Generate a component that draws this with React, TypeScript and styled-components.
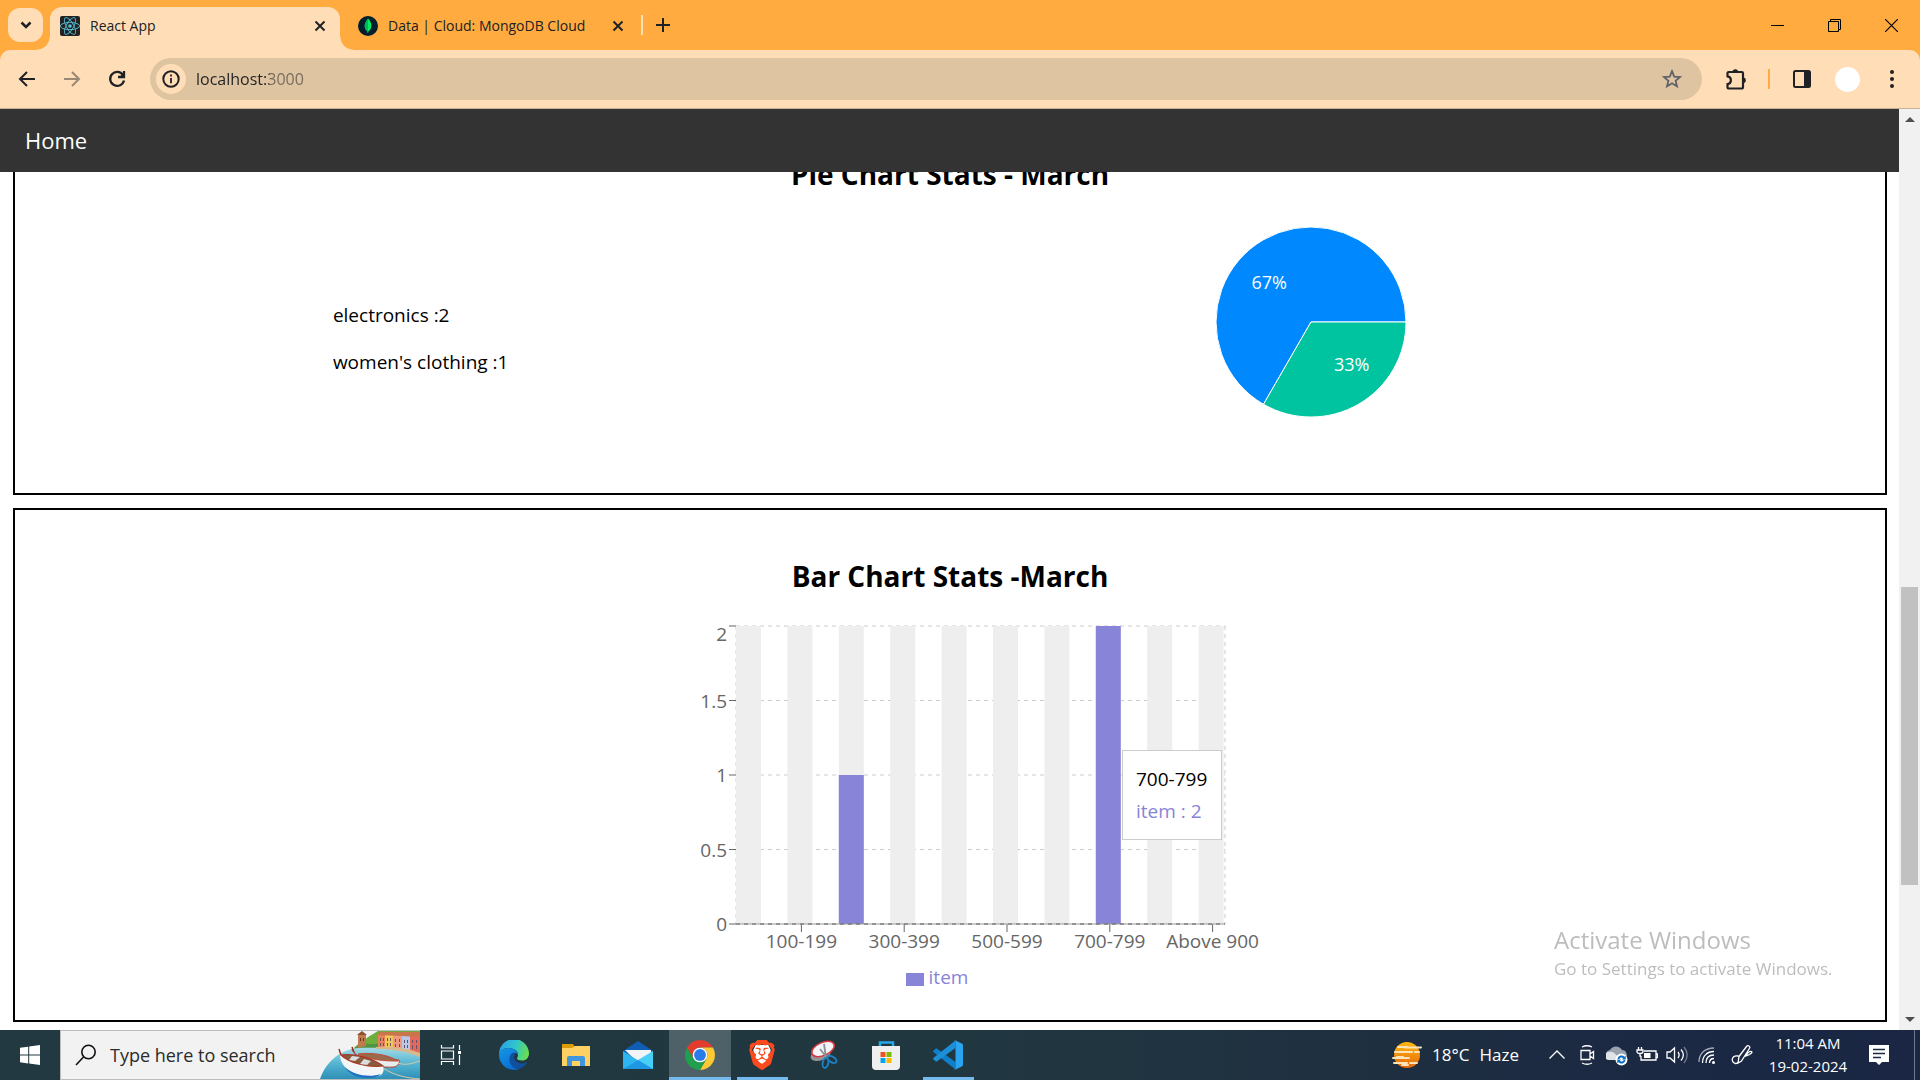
import React from "react";
import styled, { createGlobalStyle, css } from "styled-components";
import { FaReact } from "react-icons/fa";
import { SiBrave } from "react-icons/si";

const uiFont = `"Open Sans", "Noto Sans", "Liberation Sans", sans-serif`;

const GlobalStyle = createGlobalStyle`
  *, *::before, *::after { box-sizing: border-box; }
  html, body { margin: 0; padding: 0; }
  body { font-family: ${uiFont}; background: #fff; overflow: hidden; }
  button, input { font-family: inherit; }
  button { border: 0; padding: 0; background: none; color: inherit; cursor: pointer; }
  svg { display: block; flex: none; }
`;

const Screen = styled.div`
  display: flex;
  flex-direction: column;
  height: 100vh;
`;

/* ---------- browser chrome ---------- */

const TabStrip = styled.header`
  display: flex;
  align-items: center;
  flex: none;
  height: 50px;
  padding-left: 8px;
  background: #ffab40;
  color: #202124;
`;

const TabSearch = styled.button`
  display: grid;
  place-items: center;
  width: 35px;
  height: 34px;
  margin-right: 7px;
  border-radius: 12px;
  background: #ffdeb7;
`;

const Tab = styled.div<{ $active?: boolean }>`
  display: flex;
  align-items: center;
  align-self: flex-end;
  position: relative;
  height: 43px;
  padding: 0 10px 6px;
  font-size: 14px;
  line-height: 20px;
  ${(p) =>
    p.$active
      ? css`
          width: 290px;
          margin-right: 8px;
          background: #ffdeb7;
          border-radius: 12px 12px 0 0;
          &::before,
          &::after {
            content: "";
            position: absolute;
            bottom: 0;
            width: 13px;
            height: 13px;
          }
          &::before {
            right: 100%;
            background: radial-gradient(circle at 0 0, transparent 12px, #ffdeb7 13px);
          }
          &::after {
            left: 100%;
            background: radial-gradient(circle at 100% 0, transparent 12px, #ffdeb7 13px);
          }
        `
      : css`
          width: 290px;
          margin-right: 3px;
        `}
`;

const TabTitle = styled.span`
  flex: 1;
  margin-left: 10px;
  white-space: nowrap;
`;

const IconButton = styled.button<{ $w?: number }>`
  display: grid;
  place-items: center;
  flex: none;
  width: ${(p) => p.$w ?? 20}px;
  height: ${(p) => (p.$w && p.$w > 40 ? 50 : 30)}px;
`;

const StripDivider = styled.span`
  width: 2px;
  height: 20px;
  margin-right: 8px;
  background: #ffdeb7;
`;

const WindowButtons = styled.div`
  display: flex;
  align-self: stretch;
  margin-left: auto;
  color: #000;
`;

const ToolbarBack = styled.div`
  flex: none;
  background: #ffab40;
`;

const Toolbar = styled.div`
  display: flex;
  align-items: center;
  height: 59px;
  padding: 0 8px 0 7px;
  border-bottom: 1px solid #c9b193;
  border-radius: 10px 10px 0 0;
  background: #ffdeb7;
  color: #202124;
`;

const ToolGroup = styled.div`
  display: flex;
  align-items: center;
  gap: 5px;
`;

const Omnibox = styled.label`
  display: flex;
  align-items: center;
  flex: 1;
  height: 42px;
  margin: 0 14px 0 13px;
  padding: 0 15px 0 6px;
  border-radius: 21px;
  background: #dfc4a1;
`;

const InfoDot = styled.span`
  display: grid;
  place-items: center;
  width: 30px;
  height: 30px;
  margin-right: 10px;
  border-radius: 50%;
  background: #ffdeb7;
`;

const AddressInput = styled.input`
  flex: 1;
  min-width: 0;
  height: 30px;
  padding: 0;
  border: 0;
  outline: 0;
  font-size: 16px;
  line-height: 30px;
  color: #202124;
  background: linear-gradient(90deg, #202124 74px, #75695a 74px);
  -webkit-background-clip: text;
  background-clip: text;
  -webkit-text-fill-color: transparent;
`;

const ToolDivider = styled.span`
  width: 2px;
  height: 20px;
  margin: 0 12px;
  background: #ffab40;
`;

const Avatar = styled.span`
  width: 25px;
  height: 25px;
  border-radius: 50%;
  background: #fff;
`;

/* ---------- page ---------- */

const Viewport = styled.div`
  display: flex;
  flex: 1;
  min-height: 0;
`;

const Page = styled.div`
  display: flex;
  flex-direction: column;
  flex: 1;
  min-width: 0;
  overflow: hidden;
  background: #fff;
  color: #000;
`;

const Nav = styled.nav`
  position: relative;
  z-index: 2;
  display: flex;
  align-items: center;
  flex: none;
  height: 63px;
  padding: 0 25px 2px;
  background: #333;
`;

const NavLink = styled.a`
  color: #fff;
  font-size: 22px;
  line-height: 30px;
  text-decoration: none;
`;

/* Scrolled so that the first card's top edge sits under the nav bar. */
const Content = styled.main`
  display: flex;
  flex-direction: column;
  gap: 13px;
  margin-top: -66px;
  padding: 0 12px 0 13px;
`;

const Card = styled.section<{ $bottom: number }>`
  flex: none;
  padding: 46px 0 ${(p) => p.$bottom}px;
  border: 2px solid #000;
`;

const CardTitle = styled.h2`
  margin: 0 0 3px;
  font-size: 28px;
  line-height: 40px;
  font-weight: 700;
  text-align: center;
`;

const PieRow = styled.div`
  display: grid;
  grid-template-columns: 1fr 1fr;
`;

const CategoryList = styled.div`
  display: flex;
  flex-direction: column;
  gap: 20px;
  padding: 105px 0 0 34%;
  font-size: 19px;
  line-height: 27px;
`;

const CategoryLine = styled.p`
  margin: 0;
`;

const PieCell = styled.div`
  display: flex;
  justify-content: center;
  padding-right: 214px;
`;

const BarChart = styled.div`
  position: relative;
  width: 624px;
  margin: 0 auto;
  svg {
    overflow: visible;
  }
`;

const Legend = styled.div`
  display: flex;
  align-items: center;
  justify-content: center;
  gap: 5px;
  padding-right: 26px;
  color: #8884d8;
  font-size: 19px;
  line-height: 27px;
`;

const Swatch = styled.span`
  width: 18px;
  height: 13px;
  margin-top: 3px;
  background: #8884d8;
`;

const Tooltip = styled.div`
  position: absolute;
  left: 484px;
  top: 151px;
  width: 100px;
  padding: 12px 13px;
  border: 1px solid #ccc;
  background: #fff;
  font-size: 19px;
  line-height: 32px;
  white-space: nowrap;
`;

const TooltipLine = styled.p<{ $color?: string }>`
  margin: 0;
  color: ${(p) => p.$color ?? "#000"};
`;

const ScrollTrack = styled.div`
  display: flex;
  flex-direction: column;
  align-items: center;
  flex: none;
  width: 21px;
  background: #f1f1f1;
`;

const ScrollArrow = styled.button`
  display: grid;
  place-items: center;
  width: 21px;
  height: 21px;
`;

const ScrollLane = styled.div`
  display: grid;
  grid-template-rows: 457fr 298fr 124fr;
  flex: 1;
  width: 17px;
`;

const ScrollThumb = styled.div`
  grid-row: 2;
  background: #c1c1c1;
`;

const Watermark = styled.div`
  position: fixed;
  right: 80px;
  bottom: 98px;
  z-index: 5;
  width: 286px;
  color: #bdbdbd;
  font-size: 17px;
  line-height: 26px;
  white-space: nowrap;
  pointer-events: none;
`;

const WatermarkTitle = styled.div`
  font-size: 24px;
  line-height: 32px;
`;

/* ---------- taskbar ---------- */

const Taskbar = styled.footer`
  display: flex;
  flex: none;
  height: 50px;
  background: linear-gradient(90deg, #223941, #213740 50%, #1f3040 70%, #1b2943 85%, #1a2643);
  color: #fff;
`;

const TaskButton = styled.button<{ $state?: "open" | "active"; $w?: number }>`
  display: grid;
  place-items: center;
  position: relative;
  width: ${(p) => p.$w ?? 62}px;
  height: 50px;
  ${(p) =>
    p.$state &&
    css`
      background: ${p.$state === "active" ? "#4f6168" : "none"};
      &::after {
        content: "";
        position: absolute;
        bottom: 0;
        left: ${p.$state === "active" ? 0 : 6}px;
        right: ${p.$state === "active" ? 0 : 5}px;
        height: 3px;
        background: #76b9ed;
      }
    `}
`;

const SearchBox = styled.label`
  display: flex;
  align-items: center;
  width: 360px;
  padding-left: 14px;
  border: 1px solid #bcbcbc;
  border-right: 0;
  background: #f2f2f2;
  color: #1c1c1c;
`;

const SearchInput = styled.input`
  flex: 1;
  min-width: 0;
  margin-left: 13px;
  padding: 0;
  border: 0;
  outline: 0;
  background: none;
  font-size: 18px;
  line-height: 26px;
  &::placeholder {
    color: #2b2b2b;
    opacity: 1;
  }
`;

const Weather = styled.button`
  display: flex;
  align-items: center;
  gap: 10px;
  margin-left: auto;
  padding-right: 23px;
  font-size: 17px;
  line-height: 24px;
`;

const Clock = styled.button`
  width: 92px;
  font-size: 15px;
  line-height: 23px;
  text-align: center;
`;

const ShowDesktop = styled.button`
  width: 6px;
  margin-left: 10px;
  border-left: 1px solid #6d7788;
`;

/* ---------- icons ---------- */

const Cross = () => (
  <svg width="12" height="12" viewBox="0 0 12 12" stroke="currentColor" strokeWidth="2">
    <path d="M1.5 1.5l9 9M10.5 1.5l-9 9" />
  </svg>
);

const MongoIcon = () => (
  <svg width="20" height="20" viewBox="0 0 20 20">
    <circle cx="10" cy="10" r="10" fill="#001e2b" />
    <path d="M10 2.5C12.5 5 13.4 7.300 13.400 9.700c0 2.600-1.500 4.500-3.100 5.800l-.2 1.800h-.3l-.2-1.800C8 14.200 6.700 12.300 6.700 9.700 6.700 7.200 8.300 5 10 2.500z" fill="#00ed64" />
    <path d="M10 3v14.300h-.2l-.2-1.800C8 14.200 6.700 12.300 6.700 9.700 6.700 7.200 8.300 5 10 3z" fill="#00b755" />
  </svg>
);

const BackArrow = ({ flip }: { flip?: boolean }) => (
  <svg width="18" height="18" viewBox="0 0 18 18" fill="none" stroke="currentColor" strokeWidth="2" opacity={flip ? 0.45 : 1} transform={flip ? "scale(-1 1)" : undefined}>
    <path d="M17 9H3M9 2L2 9l7 7" />
  </svg>
);

const Reload = () => (
  <svg width="18" height="18" viewBox="0 0 18 18" fill="none" stroke="currentColor" strokeWidth="2.300">
    <path d="M15 5A7 7 0 1 0 16 10.500" />
    <path d="M16 1v6h-6" />
    <path d="M15.800 2.500v4.300h-4z" fill="currentColor" stroke="none" />
  </svg>
);

const Info = () => (
  <svg width="18" height="18" viewBox="0 0 18 18" fill="none" stroke="currentColor">
    <circle cx="9" cy="9" r="7.700" strokeWidth="2" />
    <path d="M9 8v5.200M9 4.600v2" strokeWidth="1.800" />
  </svg>
);

const Star = () => (
  <svg width="20" height="20" viewBox="0 0 20 20" fill="none" stroke="#5f6368" strokeWidth="1.800">
    <path d="M10 2.200l2.200 5.400 5.800.4-4.400 3.800 1.400 5.600-5-3.100-5 3.100 1.400-5.600L2 8l5.800-.4z" />
  </svg>
);

const Puzzle = () => (
  <svg width="22" height="22" viewBox="0 0 22 22" fill="none" stroke="currentColor" strokeWidth="2.200">
    <path d="M2.500 8.300V5.200a1.200 1.200 0 0 1 1.200-1.200h13.100A1.200 1.200 0 0 1 18 5.200v14.100a1.200 1.200 0 0 1-1.200 1.200H3.700a1.200 1.200 0 0 1-1.200-1.200v-3.200c4.500-.6 4.500-7.200 0-7.800z" />
    <path d="M7.500 4a2.800 2.800 0 0 1 5.600 0zM18 9.500a2.800 2.800 0 0 1 0 5.600z" fill="currentColor" stroke="none" />
  </svg>
);

const SidePanel = () => (
  <svg width="18" height="18" viewBox="0 0 18 18">
    <rect x="1" y="1" width="16" height="16" rx="1.500" fill="none" stroke="currentColor" strokeWidth="2" />
    <path d="M11 1h6v16h-6z" fill="currentColor" />
  </svg>
);

const Dots = () => (
  <svg width="4" height="18" viewBox="0 0 4 18" fill="currentColor">
    <circle cx="2" cy="2" r="2" />
    <circle cx="2" cy="9" r="2" />
    <circle cx="2" cy="16" r="2" />
  </svg>
);

const SearchArt = () => (
  <svg width="100" height="48" viewBox="0 0 100 48">
    <defs>
      <linearGradient id="sea" x1="0" y1="0" x2="0" y2="1">
        <stop offset="0" stopColor="#a5dbe6" />
        <stop offset=".5" stopColor="#55b5d2" />
        <stop offset="1" stopColor="#2e8fb8" />
      </linearGradient>
    </defs>
    <path d="M34 17C40 10 52 4 58 0h42v22L62 20z" fill="#6fae3e" />
    <path d="M34 18c4-5 10-6 15-5s12-3 20 4l-10 5z" fill="#4f9440" />
    <path d="M38 3l4-2 4 3v11l-8 2z" fill="#c07a4e" />
    <path d="M37 4l5-4 5 4z" fill="#8f4f35" />
    <path d="M40 7h1v3h-1zM43 7h1v3h-1z" fill="#633" />
    <path d="M58 4h7v13h-7z" fill="#e98256" />
    <path d="M65 3h8v14h-8z" fill="#f3c757" />
    <path d="M73 4h9v14h-9z" fill="#ef9a80" />
    <path d="M82 5h8v14h-8z" fill="#b9c7e8" />
    <path d="M90 4h10v17H90z" fill="#e4695b" />
    <path d="M57 4l3-3h40v5l-18-1z" fill="#c9764a" />
    <g fill="#65536b">
      <path d="M60 7h1v3h-1zM63 7h1v3h-1zM67 7h1v3h-1zM70 7h1v3h-1zM75 8h1v3h-1zM79 8h1v3h-1zM84 9h1v3h-1zM87 9h1v3h-1zM92 9h1v3h-1zM96 9h1v3h-1z" />
      <path d="M60 12h1v3h-1zM63 12h1v3h-1zM67 12h1v3h-1zM70 12h1v3h-1zM75 13h1v3h-1zM79 13h1v3h-1zM84 14h1v3h-1zM87 14h1v3h-1zM92 14h1v4h-1zM96 14h1v4h-1z" />
    </g>
    <path d="M0 48C5 33 18 19 38 17c20-1 40 0 62 7v24z" fill="url(#sea)" />
    <path d="M56 16c16-1 30 1 44 6v4c-14-6-28-8-44-8z" fill="#d9b88b" />
    <path d="M32 18c2 6 6 7 11 8l36 3c1 3-1 6-5 7-12 1-27-2-36-9z" fill="#e9ecef" stroke="#b43c2c" strokeWidth="1" />
    <path d="M38 23c12 6 26 7 40 7-9-6-26-9-40-7z" fill="#9a6a4a" stroke="#c24a36" />
    <path d="M20 22c-1 10 8 20 20 23 10 2 20 1 22-2 2-3 2-5 1-8-18-1-34-5-43-13z" fill="#f4f5f6" />
    <path d="M25 36c8 8 24 11 36 7-4 4-12 5-22 3-7-2-12-6-14-10z" fill="#1f6fc4" />
    <path d="M21 24c12-2 32 3 42 11-14 2-34-3-42-11z" fill="#8b5a3c" stroke="#a93425" strokeWidth="1.200" />
    <path d="M32 25l-3 4 6 1 5-4zM44 28l-4 5 7 1 4-4z" fill="#d9dde0" />
    <path d="M19 18l2 6M32 16l2 5" stroke="#8f3427" strokeWidth="1.500" />
    <path d="M63 37c12 8 25 10 37 11M78 32c8 3 15 0 22-2" stroke="#d9c9a0" fill="none" />
  </svg>
);

const EdgeIcon = () => (
  <svg width="30" height="30" viewBox="0 0 30 30">
    <defs>
      <linearGradient id="edgeTop" x1="0" y1=".4" x2="1" y2=".6">
        <stop offset="0" stopColor="#2a9fe6" />
        <stop offset=".5" stopColor="#2fc5cf" />
        <stop offset="1" stopColor="#6be04a" />
      </linearGradient>
      <linearGradient id="edgeSide" x1="0" y1="0" x2=".5" y2="1">
        <stop offset="0" stopColor="#1597e8" />
        <stop offset="1" stopColor="#0a6fd0" />
      </linearGradient>
    </defs>
    <path d="M0 15A15 15 0 0 1 30 13c0 5-3 7.500-7 7.500-3 0-5-.8-5-2 0-1 1-1.500 1-3.500C19 10 14 8 9.500 8 4 8 .6 11 0 15z" fill="url(#edgeTop)" />
    <path d="M0 15c.6-4 4-7 9.500-7 5 0 9.500 3 9.500 6.500-2-2-4-2.500-6-1-3 2.500-2 10 5 12.500l2 3A15 15 0 0 1 0 15z" fill="url(#edgeSide)" />
    <path d="M13 13.500c-5 4-3 13 5 15.700 4-.7 8-3 10-6.200.4-.6 0-.9-.6-.6-4 2-9 1-11.400-2.400-1.500-2.200-1-4.500.5-6.300-1.200-.8-2.500-.8-3.500-.2z" fill="#114f9f" />
  </svg>
);

const FolderIcon = () => (
  <svg width="30" height="30" viewBox="0 0 30 30">
    <path d="M1 4h11l2 3v4H1z" fill="#dc9a06" />
    <path d="M1 8h10l3-2h15v20H1z" fill="#ffd062" />
    <path d="M6 26v-8a2 2 0 0 1 2-2h14a2 2 0 0 1 2 2v8h-5v-5h-8v5z" fill="#3f96dc" />
  </svg>
);

const MailIcon = () => (
  <svg width="30" height="30" viewBox="0 0 30 30">
    <path d="M0 11L15 1l15 10v4H0z" fill="#0f5eb4" />
    <path d="M2 10h26v7l-13 6z" fill="#f1f3f6" />
    <path d="M0 11l16 10L0 29z" fill="#2eb4ee" />
    <path d="M30 11L0 29h30z" fill="#48cff8" />
    <path d="M0 29h30L15 20z" fill="#1e98e2" />
  </svg>
);

const ChromeIcon = () => (
  <svg width="30" height="30" viewBox="0 0 48 48">
    <circle cx="24" cy="24" r="12" fill="#fff" />
    <path d="M24 12h20.780a24 24 0 0 0-41.560 0L13.610 30A12 12 0 0 1 24 12z" fill="#e33b2e" />
    <path d="M34.390 30L24 48A24 24 0 0 0 44.780 12H24a12 12 0 0 1 10.390 18z" fill="#fcc934" />
    <path d="M13.610 30L3.220 12A24 24 0 0 0 24 48l10.390-18a12 12 0 0 1-20.780 0z" fill="#1fa04c" />
    <circle cx="24" cy="24" r="9.500" fill="#2a7bea" />
  </svg>
);

const BraveIcon = () => (
  <svg width="30" height="30" viewBox="0 0 24 24">
    <path d="M7 4h10l2 4-2 8-5 4-5-4-2-8z" fill="#fff" />
    <SiBrave size={24} color="#fb4a1e" />
  </svg>
);

const SnipIcon = () => (
  <svg width="30" height="30" viewBox="0 0 30 30" fill="none">
    <ellipse cx="12" cy="14" rx="11" ry="6" transform="rotate(-24 12 14)" fill="#90969a" />
    <ellipse cx="14" cy="9" rx="12" ry="6.500" transform="rotate(-24 14 9)" fill="#f4f5f6" stroke="#d9363b" strokeWidth="1.500" />
    <path d="M11 9l7 9M15 4l2 14" stroke="#8b9196" strokeWidth="1.800" />
    <ellipse cx="16.500" cy="23" rx="2.800" ry="5" transform="rotate(12 16.500 23)" stroke="#1d7fc0" strokeWidth="2" />
    <ellipse cx="23" cy="19.500" rx="2.800" ry="5" transform="rotate(-60 23 19.500)" stroke="#1d7fc0" strokeWidth="2" />
  </svg>
);

const StoreIcon = () => (
  <svg width="30" height="30" viewBox="0 0 30 30">
    <path d="M9 8V2.500h13V8" fill="none" stroke="#24a8e8" strokeWidth="2.500" />
    <path d="M1 6h28v20a4 4 0 0 1-4 4H5a4 4 0 0 1-4-4z" fill="#efefef" />
    <path d="M9.500 12h5v5h-5z" fill="#f25022" />
    <path d="M15.500 12h5v5h-5z" fill="#7fba00" />
    <path d="M9.500 18h5v5h-5z" fill="#00a4ef" />
    <path d="M15.500 18h5v5h-5z" fill="#ffb900" />
  </svg>
);

const CodeIcon = () => (
  <svg width="30" height="30" viewBox="0 0 30 30">
    <path d="M.6 10.500l2-1.800c.4-.4 1-.4 1.500 0L22.500 22v7.500L.6 12.300c-.6-.5-.6-1.200 0-1.800z" fill="#0f7fc9" />
    <path d="M.6 19.500l2 1.800c.4.4 1 .4 1.500 0L22.500 8V.5L.6 17.700c-.6.500-.6 1.200 0 1.800z" fill="#1b8fd8" />
    <path d="M22.500.4l6.300 3c.7.300 1.200 1 1.200 1.800v19.600c0 .8-.5 1.500-1.200 1.800l-6.300 3c-.7.300-1.500.2-2-.4 1 .8 2 .3 2-1V1.800c0-1.300-1-1.800-2-1 .5-.6 1.300-.7 2-.4z" fill="#2ba4f0" />
  </svg>
);

const HazeIcon = () => (
  <svg width="30" height="28" viewBox="0 0 30 28">
    <defs>
      <linearGradient id="sun" x1="0" y1="0" x2="0" y2="1">
        <stop offset="0" stopColor="#fcb90e" />
        <stop offset="1" stopColor="#e8650c" />
      </linearGradient>
    </defs>
    <circle cx="15" cy="14" r="13" fill="url(#sun)" />
    <g stroke="#fbe3ba" strokeWidth="2" strokeLinecap="round">
      <path d="M6 6h9M13 6.500h16M3 11h17M23 11h4M1 17h16M5 16h6M2 22h13M18 22h7M10 24h6" />
    </g>
  </svg>
);

const TrayIcon = ({ name }: { name: string }) => (
  <svg width="22" height="22" viewBox="0 0 22 22" fill="none" stroke="#fff" strokeWidth="1.300">
    {name === "More" && <path d="M3.500 14.500L11 7l7.500 7.500" />}
    {name === "Camera" && <path d="M6 3c3-1.500 7-1.500 10 0M6 19c3 1.500 7 1.500 10 0M5 6.500h9v9H5zM14 10l3.500-2.500v7L14 12" />}
    {name === "Cloud" && (
      <g stroke="none">
        <path d="M5 14a4 4 0 0 1-1-8 7 7 0 0 1 12 0 4.500 4.500 0 0 1 3 8z" fill="#9aa2ae" />
        <path d="M3 16a4 4 0 0 1 0-8c3-1 6 1 7 3l5 5z" fill="#dfe3e8" />
        <circle cx="15.500" cy="15.500" r="6" fill="#fff" />
        <path d="M11.500 15a4 4 0 0 1 7-2.200l1.200-1v3.700H16l1.200-1.200a2.500 2.500 0 0 0-4 .7zM19.500 16a4 4 0 0 1-7 2.200l-1.200 1v-3.700H15l-1.200 1.200a2.500 2.500 0 0 0 4-.7z" fill="#0a6cc4" />
      </g>
    )}
    {name === "Battery" && (
      <g>
        <path d="M8 7h12v9H5v-4M20.500 10h1v3.500h-1M2.500 3v3M5.500 3v3M1 6h6v1.500c0 1.500-1 2-3 2s-3-.5-3-2zM4 9.500V12h1" />
        <path d="M8 9h6.500v5H8z" fill="#fff" stroke="none" />
      </g>
    )}
    {name === "Volume" && (
      <g>
        <path d="M1 8h3l4.500-4v14L4 14H1z" />
        <path d="M12 8c1.500 2 1.500 4 0 6M15 5.500c3 3.500 3 7.500 0 11" />
        <path d="M18 3c4 5 4 11 0 16" opacity=".4" />
      </g>
    )}
    {name === "Network" && (
      <g>
        <path d="M3 18C3 9.500 9 4 18 4" opacity=".6" />
        <path d="M6.500 19C6.500 12 11 7.500 18 7.500M10 19c0-5 3-8 8-8M13.500 19c0-3 1.500-4.500 4.500-4.500" />
        <circle cx="17.500" cy="18.500" r="1.500" fill="#fff" stroke="none" />
      </g>
    )}
    {name === "Pen" && (
      <path d="M8 12.500l7.500-10c1.500-1.800 4-.3 3 1.800L10.500 17l-3.500 2zM8 12.500L7 19M7.500 12C3 11 .5 14 1.500 17c1 3 5 3.500 6 .5M14.500 12c2-3 4.500-5 6-4.500s-1 3.500-6 4.500z" />
    )}
  </svg>
);

const taskIcons: { label: string; icon: React.ReactNode; state?: "open" | "active" }[] = [
  { label: "Microsoft Edge", icon: <EdgeIcon /> },
  { label: "File Explorer", icon: <FolderIcon /> },
  { label: "Mail", icon: <MailIcon /> },
  { label: "Google Chrome", icon: <ChromeIcon />, state: "active" },
  { label: "Brave", icon: <BraveIcon />, state: "open" },
  { label: "Snipping Tool", icon: <SnipIcon /> },
  { label: "Microsoft Store", icon: <StoreIcon /> },
  { label: "Visual Studio Code", icon: <CodeIcon />, state: "open" },
];

/* ---------- charts ---------- */

const Pie = () => (
  <svg width="250" height="250" viewBox="0 0 250 250" stroke="#fff" fontSize="18" fontFamily={uiFont} role="img" aria-label="Share of items by category">
    <path d="M125 125H220A95 95 0 1 0 77.500 207.270z" fill="#0088fe" />
    <path d="M125 125H220A95 95 0 0 1 77.500 207.270z" fill="#00c49f" />
    <g fill="#fff" stroke="none">
      <text x="101" y="92" textAnchor="end">67%</text>
      <text x="148" y="174">33%</text>
    </g>
  </svg>
);

const bins = [
  { label: "0-99", items: 0 },
  { label: "100-199", items: 0 },
  { label: "200-299", items: 1 },
  { label: "300-399", items: 0 },
  { label: "400-499", items: 0 },
  { label: "500-599", items: 0 },
  { label: "600-699", items: 0 },
  { label: "700-799", items: 2 },
  { label: "800-899", items: 0 },
  { label: "Above 900", items: 0 },
];

const plot = { left: 98, right: 587, top: 27, bottom: 325, step: 51.4, bar: 25 };

const Bars = () => {
  const valueY = (v: number) => plot.bottom - ((plot.bottom - plot.top) * v) / 2;
  return (
    <svg width="624" height="365" viewBox="0 0 624 365" fontSize="19" fontFamily={uiFont} role="img" aria-label="Items by price range">
      <g stroke="#ccc" strokeDasharray="4 4" fill="none">
        {[0, 0.5, 1, 1.5, 2].map((v) => (
          <path key={v} d={`M${plot.left} ${valueY(v)}H${plot.right}`} />
        ))}
        <path d={`M${plot.left} ${plot.top}V${plot.bottom}M${plot.right} ${plot.top}V${plot.bottom}`} />
      </g>
      {bins.map((b, i) => {
        const x = plot.left + plot.step * i;
        return (
          <g key={b.label}>
            <rect x={x} y={plot.top} width={plot.bar} height={plot.bottom - plot.top} fill="#eee" />
            <rect x={x} y={valueY(b.items)} width={plot.bar} height={plot.bottom - valueY(b.items)} fill="#8884d8" />
            {i % 2 === 1 && (
              <>
                <path d={`M${x + 14} ${plot.bottom}v8`} stroke="#666" />
                <text x={x + 14} y={349} fill="#666" textAnchor="middle">{b.label}</text>
              </>
            )}
          </g>
        );
      })}
      <path d={`M${plot.left} ${plot.bottom}H${plot.right}`} stroke="#999" />
      <path d={`M${plot.left} ${plot.bottom}H${plot.right}`} stroke="#666" strokeDasharray="4 4" />
      {[0, 0.5, 1, 1.5, 2].map((v) => (
        <g key={v}>
          <path d={`M${plot.left - 7} ${valueY(v)}h7`} stroke="#666" />
          <text x={plot.left - 9} y={valueY(v) + (v === 2 ? 15 : 7)} fill="#666" textAnchor="end">{v}</text>
        </g>
      ))}
    </svg>
  );
};

export default function App() {
  return (
    <Screen>
      <GlobalStyle />
      <TabStrip>
        <TabSearch aria-label="Search tabs">
          <svg width="12" height="8" viewBox="0 0 12 8" fill="none" stroke="currentColor" strokeWidth="2.500">
            <path d="M1.500 1.500L6 6l4.500-4.500" />
          </svg>
        </TabSearch>
        <Tab $active>
          <svg width="20" height="20" viewBox="0 0 20 20">
            <rect width="20" height="20" rx="2" fill="#222" />
            <FaReact size={20} color="#53bcd6" />
          </svg>
          <TabTitle>React App</TabTitle>
          <IconButton aria-label="Close React App"><Cross /></IconButton>
        </Tab>
        <Tab>
          <MongoIcon />
          <TabTitle>Data | Cloud: MongoDB Cloud</TabTitle>
          <IconButton aria-label="Close MongoDB Cloud"><Cross /></IconButton>
        </Tab>
        <StripDivider />
        <IconButton $w={24} aria-label="New tab">
          <svg width="14" height="14" viewBox="0 0 14 14" stroke="currentColor" strokeWidth="2">
            <path d="M7 0v14M0 7h14" />
          </svg>
        </IconButton>
        <WindowButtons>
          <IconButton $w={57} aria-label="Minimize">
            <svg width="13" height="13" viewBox="0 0 13 13"><path d="M0 6h13v1H0z" /></svg>
          </IconButton>
          <IconButton $w={57} aria-label="Restore">
            <svg width="13" height="13" viewBox="0 0 13 13" fill="none" stroke="currentColor">
              <path d="M.5 2.500h10v10H.5zM2.500 2.500v-2h10v10h-2" />
            </svg>
          </IconButton>
          <IconButton $w={57} aria-label="Close window">
            <svg width="13" height="13" viewBox="0 0 13 13" stroke="currentColor" strokeWidth="1.200">
              <path d="M0 0l13 13M13 0L0 13" />
            </svg>
          </IconButton>
        </WindowButtons>
      </TabStrip>
      <ToolbarBack>
        <Toolbar>
          <ToolGroup>
            <IconButton $w={40} aria-label="Back"><BackArrow /></IconButton>
            <IconButton $w={40} aria-label="Forward"><BackArrow flip /></IconButton>
            <IconButton $w={40} aria-label="Reload"><Reload /></IconButton>
          </ToolGroup>
          <Omnibox>
            <InfoDot><Info /></InfoDot>
            <AddressInput aria-label="Address" defaultValue="localhost:3000" />
            <IconButton $w={30} aria-label="Bookmark this page"><Star /></IconButton>
          </Omnibox>
          <IconButton $w={40} aria-label="Extensions"><Puzzle /></IconButton>
          <ToolDivider />
          <ToolGroup>
            <IconButton $w={40} aria-label="Side panel"><SidePanel /></IconButton>
            <IconButton $w={40} aria-label="Profile"><Avatar /></IconButton>
            <IconButton $w={40} aria-label="Browser menu"><Dots /></IconButton>
          </ToolGroup>
        </Toolbar>
      </ToolbarBack>

      <Viewport>
        <Page>
          <Nav><NavLink href="#home">Home</NavLink></Nav>
          <Content>
            <Card $bottom={46}>
              <CardTitle>Pie Chart Stats - March</CardTitle>
              <PieRow>
                <CategoryList>
                  <CategoryLine>electronics :2</CategoryLine>
                  <CategoryLine>women's clothing :1</CategoryLine>
                </CategoryList>
                <PieCell><Pie /></PieCell>
              </PieRow>
            </Card>
            <Card $bottom={29}>
              <CardTitle>Bar Chart Stats -March</CardTitle>
              <BarChart>
                <Bars />
                <Legend><Swatch />item</Legend>
                <Tooltip>
                  <TooltipLine>700-799</TooltipLine>
                  <TooltipLine $color="#8884d8">item : 2</TooltipLine>
                </Tooltip>
              </BarChart>
            </Card>
          </Content>
        </Page>
        <ScrollTrack>
          <ScrollArrow aria-label="Scroll up">
            <svg width="10" height="5" viewBox="0 0 10 5"><path d="M5 0l5 5H0z" fill="#505050" /></svg>
          </ScrollArrow>
          <ScrollLane><ScrollThumb /></ScrollLane>
          <ScrollArrow aria-label="Scroll down">
            <svg width="10" height="5" viewBox="0 0 10 5"><path d="M0 0h10L5 5z" fill="#505050" /></svg>
          </ScrollArrow>
        </ScrollTrack>
      </Viewport>

      <Watermark>
        <WatermarkTitle>Activate Windows</WatermarkTitle>
        Go to Settings to activate Windows.
      </Watermark>

      <Taskbar>
        <TaskButton $w={60} aria-label="Start">
          <svg width="20" height="20" viewBox="0 0 20 20" fill="#fff">
            <path d="M0 2.800l8.200-1.100v7.900H0zM9.200 1.500L20 0v9.600H9.200zM0 10.500h8.200v7.900L0 17.300zM9.200 10.500H20V20L9.200 18.500z" />
          </svg>
        </TaskButton>
        <SearchBox>
          <svg width="22" height="22" viewBox="0 0 22 22" fill="none" stroke="#111" strokeWidth="1.600">
            <circle cx="13.500" cy="8" r="6.700" />
            <path d="M8.500 13L1 21" />
          </svg>
          <SearchInput aria-label="Search" placeholder="Type here to search" />
          <SearchArt />
        </SearchBox>
        <TaskButton $w={63} aria-label="Task view">
          <svg width="24" height="20" viewBox="0 0 24 20" fill="none" stroke="#fff" strokeWidth="1.200">
            <path d="M1.500 0v3h12V0M1.500 20v-3.500h12V20M1.500 6h12v8h-12zM19.500 0v5M19.500 10v10" />
            <path d="M18 6h3v3h-3z" fill="#fff" stroke="none" />
          </svg>
        </TaskButton>
        {taskIcons.map((t) => (
          <TaskButton key={t.label} $state={t.state} aria-label={t.label}>{t.icon}</TaskButton>
        ))}
        <Weather>
          <HazeIcon />
          <span>18°C</span>
          <span>Haze</span>
        </Weather>
        {["More", "Camera", "Cloud", "Battery", "Volume", "Network"].map((n) => (
          <TaskButton key={n} $w={30} aria-label={n}><TrayIcon name={n} /></TaskButton>
        ))}
        <TaskButton $w={40} aria-label="Pen"><TrayIcon name="Pen" /></TaskButton>
        <Clock>11:04 AM<br />19-02-2024</Clock>
        <TaskButton $w={50} aria-label="Notifications">
          <svg width="20" height="20" viewBox="0 0 20 20">
            <path d="M0 0h20v17h-7l-3 3-3-3H0z" fill="#fff" />
            <path d="M4 4.500h12M4 8.500h12M4 12.500h8" stroke="#1b2943" strokeWidth="1.300" />
          </svg>
        </TaskButton>
        <ShowDesktop aria-label="Show desktop" />
      </Taskbar>
    </Screen>
  );
}
